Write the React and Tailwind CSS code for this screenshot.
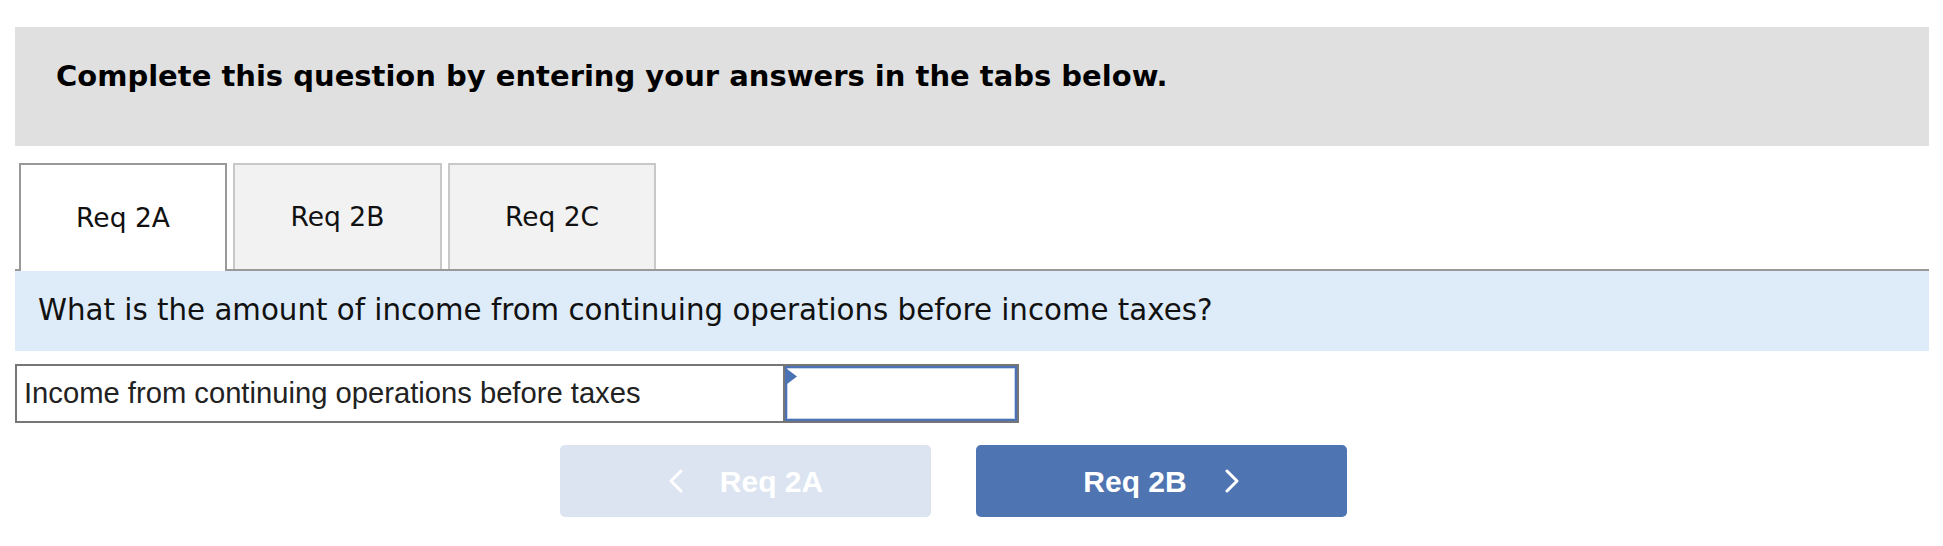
import React from "react";

function Chevron({ dir }) {
  return (
    <svg width="15" height="24" viewBox="0 0 15 24" fill="none" className="shrink-0">
      {dir === "left" ? (
        <path d="M13 2 L3 12 L13 22" stroke="white" strokeWidth="3" strokeLinecap="round" strokeLinejoin="round" />
      ) : (
        <path d="M2 2 L12 12 L2 22" stroke="white" strokeWidth="3" strokeLinecap="round" strokeLinejoin="round" />
      )}
    </svg>
  );
}

export default function App() {
  return (
    <div className="w-[1943px] h-[546px] bg-white pt-[27px] pl-[15px] pr-[14px] overflow-hidden">
      <div className="h-[119px] bg-[#e0e0e0] pl-[41px] pt-[35px]">
        <div className="text-[29px] leading-none font-bold text-black font-['DejaVu_Sans',sans-serif]">
          Complete this question by entering your answers in the tabs below.
        </div>
      </div>

      <div className="mt-[17px] flex gap-[6px] pl-[4px] border-b-2 border-[#999999] h-[108px]">
        <div className="w-[208px] h-[108px] bg-white border-2 border-b-0 border-[#999999] flex items-center justify-center text-[26.5px] text-[#111] font-['DejaVu_Sans',sans-serif]">
          Req 2A
        </div>
        <div className="w-[209px] h-[106px] bg-[#f2f2f2] border-2 border-b-0 border-[#c8c8c8] flex items-center justify-center text-[26.5px] text-[#111] font-['DejaVu_Sans',sans-serif]">
          Req 2B
        </div>
        <div className="w-[208px] h-[106px] bg-[#f2f2f2] border-2 border-b-0 border-[#c8c8c8] flex items-center justify-center text-[26.5px] text-[#111] font-['DejaVu_Sans',sans-serif]">
          Req 2C
        </div>
      </div>

      <div className="h-[80px] bg-[#deebf8] flex items-center pl-[23px] text-[29.3px] text-[#111] font-['DejaVu_Sans',sans-serif]">
        What is the amount of income from continuing operations before income taxes?
      </div>

      <div className="mt-[13px] w-[1004px] h-[59px] border-2 border-[#767676] flex">
        <div className="flex-1 flex items-center pl-[7px] text-[29.2px] text-[#222] font-['Liberation_Sans',Arial,sans-serif]">
          Income from continuing operations before taxes
        </div>
        <div className="w-[234px] h-full border-l-2 border-[#767676]">
          <div className="relative w-full h-full border-2 border-[#4a72b5]">
            <div className="absolute inset-0 border border-[#c5d4ec]" />
            <svg className="absolute left-0 top-[1px]" width="11" height="16" viewBox="0 0 11 16">
              <path d="M0 0 L10 7.5 L0 15 Z" fill="#4a72b5" />
            </svg>
          </div>
        </div>
      </div>

      <div className="mt-[22px] ml-[545px] flex gap-[45px]">
        <div className="w-[371px] h-[72px] rounded-[5px] bg-[#dbe4f0] flex items-center justify-center gap-[37px] text-white text-[30px] font-bold font-['Liberation_Sans',Arial,sans-serif]">
          <Chevron dir="left" />
          <span>Req 2A</span>
        </div>
        <div className="w-[371px] h-[72px] rounded-[5px] bg-[#4e74b2] flex items-center justify-center gap-[38px] text-white text-[30px] font-bold font-['Liberation_Sans',Arial,sans-serif]">
          <span>Req 2B</span>
          <Chevron dir="right" />
        </div>
      </div>
    </div>
  );
}
